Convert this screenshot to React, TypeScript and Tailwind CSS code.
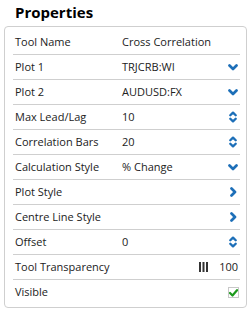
import React from 'react'

const BLUE = '#1d6fb8'

function ChevronDown() {
  return (
    <svg width="10" height="7" viewBox="0 0 10 7" className="block">
      <polyline points="1.5,1.5 5,5 8.5,1.5" fill="none" stroke={BLUE} strokeWidth="2.7" strokeLinecap="round" strokeLinejoin="round" />
    </svg>
  )
}

function ChevronRight() {
  return (
    <svg width="7" height="10" viewBox="0 0 7 10" className="block">
      <polyline points="1.5,1.5 5,5 1.5,8.5" fill="none" stroke={BLUE} strokeWidth="2.7" strokeLinecap="round" strokeLinejoin="round" />
    </svg>
  )
}

function Spinner() {
  return (
    <svg width="8" height="12" viewBox="0 0 8 12" className="block">
      <polyline points="1.3,4.3 4,1.6 6.7,4.3" fill="none" stroke={BLUE} strokeWidth="2.3" strokeLinecap="round" strokeLinejoin="round" />
      <polyline points="1.3,7.7 4,10.4 6.7,7.7" fill="none" stroke={BLUE} strokeWidth="2.3" strokeLinecap="round" strokeLinejoin="round" />
    </svg>
  )
}

function Bars() {
  return (
    <svg width="9" height="10" viewBox="0 0 9 10" className="block">
      <rect x="0" y="0" width="2" height="10" fill="#333" />
      <rect x="3.5" y="0" width="2" height="10" fill="#333" />
      <rect x="7" y="0" width="2" height="10" fill="#333" />
    </svg>
  )
}

function Check() {
  return (
    <div className="flex h-[11px] w-[11px] items-center justify-center border border-[#c8c8c8] bg-white">
      <svg width="9" height="8" viewBox="0 0 9 8" className="block">
        <polyline points="1,4 3.5,6.5 8,1.2" fill="none" stroke="#1c9a1c" strokeWidth="2.2" strokeLinecap="round" strokeLinejoin="round" />
      </svg>
    </div>
  )
}

type Row = { label: string; value?: string; icon?: React.ReactNode; right?: React.ReactNode }

const rows: Row[] = [
  { label: 'Tool Name', value: 'Cross Correlation' },
  { label: 'Plot 1', value: 'TRJCRB:WI', icon: <ChevronDown /> },
  { label: 'Plot 2', value: 'AUDUSD:FX', icon: <ChevronDown /> },
  { label: 'Max Lead/Lag', value: '10', icon: <Spinner /> },
  { label: 'Correlation Bars', value: '20', icon: <Spinner /> },
  { label: 'Calculation Style', value: '% Change', icon: <ChevronDown /> },
  { label: 'Plot Style', icon: <ChevronRight /> },
  { label: 'Centre Line Style', icon: <ChevronRight /> },
  { label: 'Offset', value: '0', icon: <Spinner /> },
  {
    label: 'Tool Transparency',
    right: (
      <div className="flex items-center gap-[11px]">
        <Bars />
        <span>100</span>
      </div>
    ),
  },
  { label: 'Visible', icon: <Check /> },
]

export default function App() {
  return (
    <div
      className="h-[311px] w-[252px] bg-white pl-[4px] text-[11px] text-[#222]"
      style={{ fontFamily: '"Open Sans", "Noto Sans", sans-serif' }}
    >
      <h1 className="h-[26px] pl-[11px] pt-[1px] text-[15px] font-bold leading-[22px] text-black">Properties</h1>
      <div className="w-[243px] rounded-[4px] border border-[#cfcfcf] pb-[2px] pl-[8px] pr-[6px] pt-[3px]">
        {rows.map((r, i) => (
          <div
            key={r.label}
            className={`flex h-[25px] items-center pl-[2px] pr-[2px] ${i < rows.length - 1 ? 'border-b border-[#cfcfcf]' : ''}`}
          >
            <div className="w-[107px] shrink-0 whitespace-nowrap">{r.label}</div>
            <div className="flex-1 whitespace-nowrap">{r.value}</div>
            {r.icon && <div className="flex w-[10px] justify-center">{r.icon}</div>}
            {r.right}
          </div>
        ))}
      </div>
    </div>
  )
}
